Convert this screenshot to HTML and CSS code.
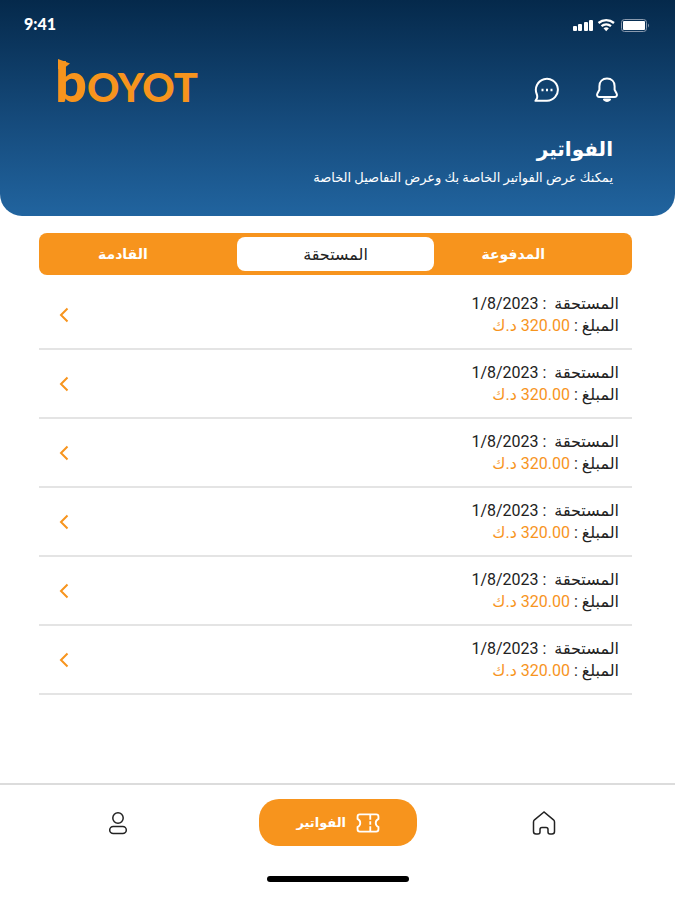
FILE: index.html
```html
<!DOCTYPE html>
<html lang="ar" dir="rtl">
<head>
    <meta charset="UTF-8">
    <meta name="viewport" content="width=device-width, initial-scale=1.0">
    <title>الفواتير</title>
    <link rel="stylesheet" href="styles.css">
</head>

<body>
<header class="header">
    <div class="statusbar" dir="ltr">
        <span class="time">9:41</span>
        <svg class="signal" width="78" height="16" viewBox="0 0 78 16" fill="#fff" aria-hidden="true">
            <rect x="0" y="10" width="4" height="5" rx="1"/>
            <rect x="5" y="8" width="4" height="7" rx="1"/>
            <rect x="11" y="6" width="4" height="9" rx="1"/>
            <rect x="16" y="4" width="4" height="11" rx="1"/>
            <path d="M25.500 7a12 12 0 0 1 15.500 0M28.500 10.200a7.500 7.500 0 0 1 9.500 0" fill="none" stroke="#fff" stroke-width="2.300"/>
            <path d="M33.200 15.200l-2.700-2.900a4.500 4.500 0 0 1 5.400 0z"/>
            <rect x="48.500" y="3.500" width="25" height="12" rx="3" fill="none" stroke="#8a9aae"/>
            <rect x="50" y="5" width="22" height="9" rx="1"/>
            <path d="M75 7.500q2 2 0 4z" fill="#8a9aae"/>
        </svg>
    </div>

    <div class="topbar" dir="ltr">
        <a class="logo" href="#" aria-label="BOYOT">
            <svg class="flag" width="14" height="14" viewBox="0 0 14 14" aria-hidden="true"><path d="M0 0l12 4.500L5 10H0z"/></svg>
            <span class="logo-b">b</span><span>OYOT</span>
        </a>
        <div class="actions">
            <button type="button" aria-label="الرسائل">
                <svg width="26" height="26" viewBox="0 0 26 26">
                    <path d="M1.500 23.800h11.500a11 11 0 1 0-10.300-6.800q.9 2.200.3 4.300z"/>
                    <path d="M7.500 13h2M12 13h2M16.500 13h2" stroke-width="2.400"/>
                </svg>
            </button>
            <button type="button" aria-label="الإشعارات">
                <svg width="26" height="26" viewBox="0 0 26 26">
                    <path d="M13 1.600c-4.600 0-7.600 3.200-7.600 7.600v3.600l-2 3.600c-1 2 .2 3.600 2.200 3.600h14.800c2 0 3.200-1.600 2.200-3.600l-2-3.600V9.200c0-4.400-3-7.600-7.600-7.600z"/>
                    <path d="M10 22.500q3 3 6 0z" fill="#fff"/>
                </svg>
            </button>
        </div>
    </div>

    <div class="heading">
        <h1>الفواتير</h1>
        <p>يمكنك عرض الفواتير الخاصة بك وعرض التفاصيل الخاصة</p>
    </div>
</header>

<main class="content">
    <div class="tabs">
        <button type="button" class="tab paid">المدفوعة</button>
        <button type="button" class="tab active">المستحقة</button>
        <button type="button" class="tab upcoming">القادمة</button>
    </div>

    <ul class="bills">
        <li>
            <div class="bill">
                <p>المستحقة &nbsp;: <bdi>1/8/2023</bdi></p>
                <p>المبلغ : <span class="amount">320.00 د.ك</span></p>
            </div>
            <a class="more" href="#" aria-label="التفاصيل"><svg width="10" height="16" viewBox="0 0 10 16"><path d="M8.500 1.500L2 8l6.500 6.500"/></svg></a>
        </li>
        <li>
            <div class="bill">
                <p>المستحقة &nbsp;: <bdi>1/8/2023</bdi></p>
                <p>المبلغ : <span class="amount">320.00 د.ك</span></p>
            </div>
            <a class="more" href="#" aria-label="التفاصيل"><svg width="10" height="16" viewBox="0 0 10 16"><path d="M8.500 1.500L2 8l6.500 6.500"/></svg></a>
        </li>
        <li>
            <div class="bill">
                <p>المستحقة &nbsp;: <bdi>1/8/2023</bdi></p>
                <p>المبلغ : <span class="amount">320.00 د.ك</span></p>
            </div>
            <a class="more" href="#" aria-label="التفاصيل"><svg width="10" height="16" viewBox="0 0 10 16"><path d="M8.500 1.500L2 8l6.500 6.500"/></svg></a>
        </li>
        <li>
            <div class="bill">
                <p>المستحقة &nbsp;: <bdi>1/8/2023</bdi></p>
                <p>المبلغ : <span class="amount">320.00 د.ك</span></p>
            </div>
            <a class="more" href="#" aria-label="التفاصيل"><svg width="10" height="16" viewBox="0 0 10 16"><path d="M8.500 1.500L2 8l6.500 6.500"/></svg></a>
        </li>
        <li>
            <div class="bill">
                <p>المستحقة &nbsp;: <bdi>1/8/2023</bdi></p>
                <p>المبلغ : <span class="amount">320.00 د.ك</span></p>
            </div>
            <a class="more" href="#" aria-label="التفاصيل"><svg width="10" height="16" viewBox="0 0 10 16"><path d="M8.500 1.500L2 8l6.500 6.500"/></svg></a>
        </li>
        <li>
            <div class="bill">
                <p>المستحقة &nbsp;: <bdi>1/8/2023</bdi></p>
                <p>المبلغ : <span class="amount">320.00 د.ك</span></p>
            </div>
            <a class="more" href="#" aria-label="التفاصيل"><svg width="10" height="16" viewBox="0 0 10 16"><path d="M8.500 1.500L2 8l6.500 6.500"/></svg></a>
        </li>
    </ul>
</main>

<footer class="bottom">
    <nav class="bottomnav">
        <a href="#" aria-label="الرئيسية">
            <svg width="24" height="26" viewBox="0 0 24 26">
                <path d="M12 2L2.500 9.800Q1.500 10.700 1.500 12v9.500q0 2.500 2.500 2.500h2q2 0 2-2v-2.500q0-2 2-2h4q2 0 2 2V22q0 2 2 2h2q2.500 0 2.500-2.500V12q0-1.300-1-2.200z"/>
            </svg>
        </a>
        <a class="current" href="#">
            <svg width="24" height="20" viewBox="0 0 26 22">
                <path d="M4 1.500h18q2.500 0 2.500 2.500v2.500q-3 1.500-3 4.500t3 4.500V18q0 2.500-2.500 2.500H4q-2.500 0-2.500-2.500v-2.500q3-1.500 3-4.500t-3-4.500V4q0-2.500 2.500-2.500z"/>
                <path d="M15.500 1.500v6M15.500 9v4M15.500 14.500v6"/>
            </svg>
            <span>الفواتير</span>
        </a>
        <a href="#" aria-label="الحساب">
            <svg width="20" height="24" viewBox="0 0 20 24">
                <circle cx="10" cy="7" r="5.200"/>
                <rect x="1.700" y="15.500" width="16.600" height="7" rx="3.500"/>
            </svg>
        </a>
    </nav>
    <div class="homebar"></div>
</footer>
</body>

</html>
```
FILE: styles.css
```css
*{
    box-sizing: border-box;
}
body{
    margin: 0;
    min-height: 100vh;
    display: flex;
    flex-direction: column;
    font-family: Roboto, "DejaVu Sans", sans-serif;
    color: #222;
    background-color: #fff;
}
h1, p, ul{
    margin: 0;
    padding: 0;
}
button{
    font-family: inherit;
    border: 0;
    padding: 0;
    background: none;
    cursor: pointer;
}
svg{
    display: block;
    flex: none;
}

.header{
    height: 216px;
    color: #fff;
    background: linear-gradient(#05294b, #154a7b 55%, #21649f);
    border-radius: 0 0 22px 22px;
}
.statusbar{
    display: flex;
    justify-content: space-between;
    align-items: center;
    padding: 14px 24px 0;
}
.time{
    font-family: Lato, sans-serif;
    font-size: 16px;
    line-height: 20px;
    font-weight: 900;
}
.topbar{
    display: flex;
    justify-content: space-between;
    align-items: center;
    height: 56px;
    margin-top: 22px;
    padding: 0 55px 0 55px;
}
.logo{
    position: relative;
    font-family: Lato, sans-serif;
    font-size: 40px;
    font-weight: 900;
    line-height: 48px;
    color: #f7941d;
    text-decoration: none;
}
.logo-b{
    font-size: 56px;
}
.flag{
    position: absolute;
    left: 3px;
    top: 2px;
    fill: #f7941d;
}
.actions{
    display: flex;
    gap: 34px;
    padding-top: 12px;
}
.actions svg{
    fill: none;
    stroke: #fff;
    stroke-width: 2;
    stroke-linejoin: round;
}
.heading{
    padding: 20px 62px 0;
}
.heading h1{
    font-size: 20px;
    line-height: 34px;
    font-weight: bold;
}
.heading p{
    font-size: 13px;
    line-height: 24px;
}

.content{
    padding: 17px 43px 0 39px;
}
.tabs{
    display: grid;
    grid-template-columns: repeat(3, 1fr);
    padding: 4px 0;
    background-color: #f7941d;
    border-radius: 8px;
}
.tab{
    height: 34px;
    font-size: 14px;
    font-weight: bold;
    color: #fff;
    border-radius: 8px;
}
.tab.active{
    color: #222;
    background-color: #fff;
    font-size: 16px;
    font-weight: normal;
}
.paid{
    padding-right: 40px;
}
.upcoming{
    padding-right: 30px;
}
.bills{
    list-style: none;
    padding-top: 6px;
}
.bills li{
    display: flex;
    justify-content: space-between;
    align-items: center;
    height: 69px;
    padding: 0 13px 0 20px;
    border-bottom: 2px solid #e4e4e4;
}
.bill{
    font-size: 16px;
    line-height: 22px;
}
.amount{
    color: #f7941d;
}
.more svg{
    fill: none;
    stroke: #f7941d;
    stroke-width: 2;
}

.bottom{
    margin-top: auto;
    border-top: 2px solid #dcdcdc;
    padding: 14px 0 18px;
}
.bottomnav{
    display: grid;
    grid-template-columns: 7fr 7fr 8fr;
    justify-items: center;
    align-items: center;
    padding-right: 28px;
}
.bottomnav svg{
    fill: none;
    stroke: #222;
    stroke-width: 1.5;
}
.bottomnav .current{
    display: flex;
    align-items: center;
    justify-content: center;
    gap: 10px;
    width: 158px;
    height: 47px;
    font-size: 13px;
    font-weight: bold;
    color: #fff;
    text-decoration: none;
    background-color: #f7941d;
    border-radius: 20px;
}
.bottomnav .current svg{
    stroke: #fff;
    stroke-width: 2;
}
.homebar{
    width: 142px;
    height: 6px;
    margin: 30px auto 0;
    background-color: #000;
    border-radius: 3px;
}
```
